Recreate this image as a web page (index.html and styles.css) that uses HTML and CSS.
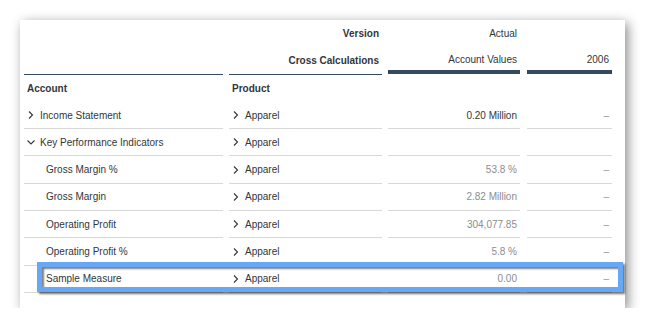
FILE: index.html
```html
<!DOCTYPE html>
<html lang="en">
<head>
<meta charset="utf-8">
<title>Cross Calculations</title>
<link rel="stylesheet" href="styles.css">
</head>
<body>
<div class="card">
  <div class="grid">
    <!-- header row 1 -->
    <div class="cell"></div>
    <div class="cell right bold">Version</div>
    <div class="cell right">Actual</div>
    <div class="cell"></div>

    <!-- header row 2 -->
    <div class="cell rule-thin"></div>
    <div class="cell right bold rule-thin">Cross Calculations</div>
    <div class="cell right rule-thick">Account Values</div>
    <div class="cell right rule-thick">2006</div>

    <!-- dimension titles -->
    <div class="cell bold">Account</div>
    <div class="cell bold">Product</div>
    <div class="cell"></div>
    <div class="cell"></div>

    <!-- data -->
    <div class="cell row"><svg class="chev" viewBox="0 0 8 8"><path d="M2 0.5 L5.5 4 L2 7.5"/></svg>Income Statement</div>
    <div class="cell row"><svg class="chev" viewBox="0 0 8 8"><path d="M2 0.5 L5.5 4 L2 7.5"/></svg>Apparel</div>
    <div class="cell row right strong">0.20 Million</div>
    <div class="cell row right dash">–</div>

    <div class="cell row"><svg class="chev" viewBox="0 0 8 8"><path d="M0.5 2.5 L4 6 L7.5 2.5"/></svg>Key Performance Indicators</div>
    <div class="cell row"><svg class="chev" viewBox="0 0 8 8"><path d="M2 0.5 L5.5 4 L2 7.5"/></svg>Apparel</div>
    <div class="cell row"></div>
    <div class="cell row"></div>

    <div class="cell row sub">Gross Margin %</div>
    <div class="cell row"><svg class="chev" viewBox="0 0 8 8"><path d="M2 0.5 L5.5 4 L2 7.5"/></svg>Apparel</div>
    <div class="cell row right muted">53.8 %</div>
    <div class="cell row right dash">–</div>

    <div class="cell row sub">Gross Margin</div>
    <div class="cell row"><svg class="chev" viewBox="0 0 8 8"><path d="M2 0.5 L5.5 4 L2 7.5"/></svg>Apparel</div>
    <div class="cell row right muted">2.82 Million</div>
    <div class="cell row right dash">–</div>

    <div class="cell row sub">Operating Profit</div>
    <div class="cell row"><svg class="chev" viewBox="0 0 8 8"><path d="M2 0.5 L5.5 4 L2 7.5"/></svg>Apparel</div>
    <div class="cell row right muted">304,077.85</div>
    <div class="cell row right dash">–</div>

    <div class="cell row sub">Operating Profit %</div>
    <div class="cell row"><svg class="chev" viewBox="0 0 8 8"><path d="M2 0.5 L5.5 4 L2 7.5"/></svg>Apparel</div>
    <div class="cell row right muted">5.8 %</div>
    <div class="cell row right dash">–</div>

    <div class="cell row sub">Sample Measure</div>
    <div class="cell row"><svg class="chev" viewBox="0 0 8 8"><path d="M2 0.5 L5.5 4 L2 7.5"/></svg>Apparel</div>
    <div class="cell row right muted">0.00</div>
    <div class="cell row right dash">–</div>
  </div>
  <div class="highlight"></div>
</div>
</body>
</html>
```

FILE: styles.css
```css
html, body {
  margin: 0;
  padding: 0;
  background: #ffffff;
}

body {
  padding: 20px 0 0 20px;
  font-family: "Liberation Sans", Arial, sans-serif;
  font-size: 10px;
  color: #32363a;
}

.card {
  position: relative;
  width: 605px;
  height: 288px;
  box-sizing: border-box;
  padding-left: 4px;
  background: #ffffff;
  box-shadow: 3px 3px 11px rgba(0, 0, 0, 0.45);
}

.grid {
  display: grid;
  grid-template-columns: 199px 153px 132px 85px;
  grid-auto-rows: 27.3px;
  column-gap: 6px;
}

.grid > .cell:nth-child(4n+4) {
  margin-left: 1px;
  width: 85px;
}

.cell {
  display: flex;
  align-items: center;
  box-sizing: border-box;
  padding: 0 3px;
  white-space: nowrap;
}

.right {
  justify-content: flex-end;
}

.bold {
  font-weight: bold;
}

.rule-thin {
  border-bottom: 1px solid #354a5f;
}

.rule-thick {
  border-bottom: 4px solid #354a5f;
  padding-top: 3px;
  margin-bottom: 1px;
}

.row {
  border-bottom: 1px solid #d8d8d8;
}

.sub {
  padding-left: 22px;
}

.chev {
  width: 8px;
  height: 8px;
  margin-right: 5px;
  flex: none;
}

.chev path {
  fill: none;
  stroke: #32363a;
  stroke-width: 1.1;
}

.strong {
  color: #32363a;
}

.muted {
  color: #8a8d90;
}

.dash {
  color: #9a9a9a;
}

/* callout frame around the last row */
.highlight {
  position: absolute;
  left: 17px;
  top: 242px;
  width: 586px;
  height: 30px;
  box-sizing: border-box;
  border: 5px solid #66a8f6;
  box-shadow: 2px 2px 2px rgba(0, 0, 0, 0.55), inset 2px 2px 2px rgba(0, 0, 0, 0.5);
}
```
